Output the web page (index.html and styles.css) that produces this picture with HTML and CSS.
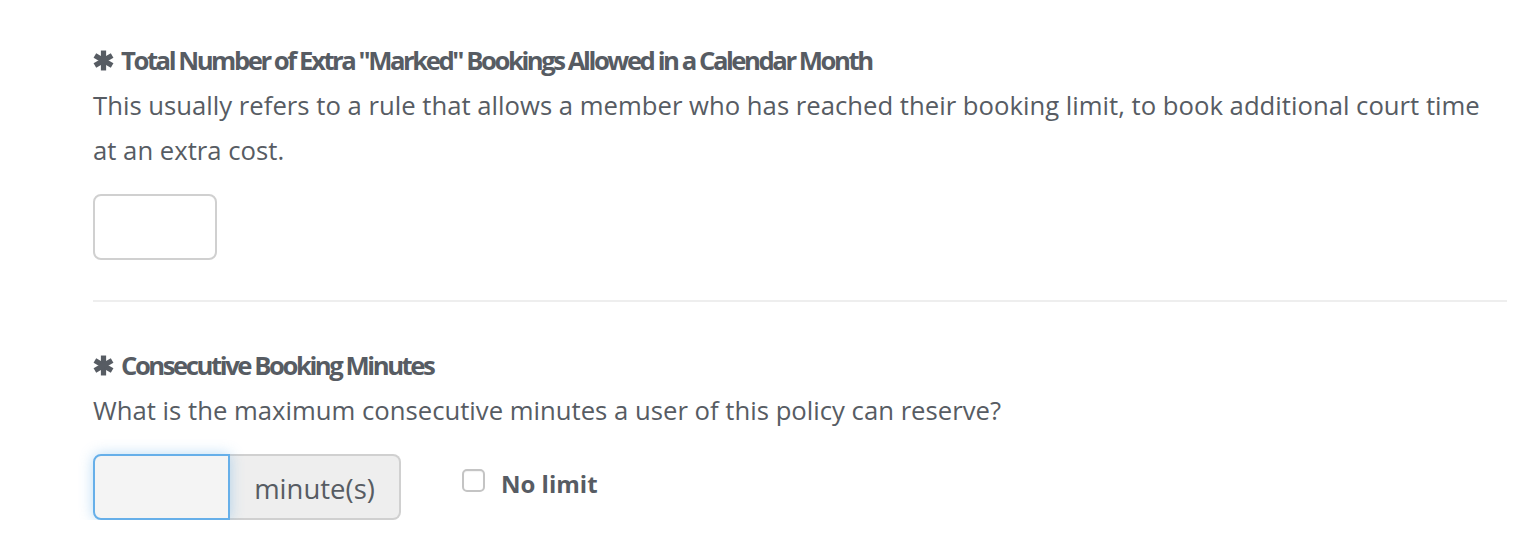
FILE: index.html
```html
<!DOCTYPE html>
<html lang="en">
<head>
<meta charset="utf-8">
<title>Booking policy</title>
<link rel="stylesheet" href="styles.css">
</head>
<body>
<div class="page">
  <section class="field">
    <h3 class="field-title">
      <svg class="req" viewBox="0 0 20 20" aria-hidden="true"><g stroke="currentColor" stroke-width="5"><line x1="10" y1="0.5" x2="10" y2="19.5"/><line x1="1.8" y1="5.25" x2="18.2" y2="14.75"/><line x1="1.8" y1="14.75" x2="18.2" y2="5.25"/></g></svg>
      <span>Total Number of Extra "Marked" Bookings Allowed in a Calendar Month</span>
    </h3>
    <p class="field-help">This usually refers to a rule that allows a member who has reached their booking limit, to book additional court time at an extra cost.</p>
    <input class="text-input small" type="text">
  </section>
  <hr class="divider">
  <section class="field">
    <h3 class="field-title">
      <svg class="req" viewBox="0 0 20 20" aria-hidden="true"><g stroke="currentColor" stroke-width="5"><line x1="10" y1="0.5" x2="10" y2="19.5"/><line x1="1.8" y1="5.25" x2="18.2" y2="14.75"/><line x1="1.8" y1="14.75" x2="18.2" y2="5.25"/></g></svg>
      <span>Consecutive Booking Minutes</span>
    </h3>
    <p class="field-help">What is the maximum consecutive minutes a user of this policy can reserve?</p>
    <div class="control-row">
      <div class="input-group">
        <input class="text-input grouped focused" type="text">
        <span class="addon">minute(s)</span>
      </div>
      <label class="check">
        <input type="checkbox" class="check-box">
        <span>No limit</span>
      </label>
    </div>
  </section>
</div>
</body>
</html>
```

FILE: styles.css
```css
* { box-sizing: border-box; }
html, body { margin: 0; padding: 0; background: #fff; }
body {
  font-family: "Open Sans", "Liberation Sans", sans-serif;
  color: #575c63;
  font-size: 24px;
}
.page {
  padding: 38px 21px 0 93px;
}
.field-title {
  margin: 0;
  font-size: 25.7px;
  line-height: 45px;
  font-weight: 700;
  letter-spacing: -2.45px;
  display: flex;
  align-items: center;
  gap: 7px;
}
.req {
  width: 21px;
  height: 21px;
  flex: none;
  color: #575c63;
}
.field-help {
  margin: 0 0 21px;
  font-size: 25.7px;
  line-height: 45px;
}
.text-input {
  display: block;
  height: 66px;
  border: 2px solid #d0d0d0;
  border-radius: 8px;
  background: #fff;
  font: inherit;
  padding: 0 16px;
  outline: none;
}
.text-input.small { width: 124px; }
.divider {
  margin: 40px 0 41px;
  border: 0;
  border-top: 2px solid #eeeeee;
}
.control-row {
  display: flex;
  align-items: flex-start;
}
.input-group {
  display: flex;
}
.text-input.grouped {
  width: 137px;
  border-radius: 8px 0 0 8px;
}
.text-input.focused {
  border-color: #66afe9;
  background: #f4f4f4;
  box-shadow: 0 0 14px rgba(102, 175, 233, 0.45);
  position: relative;
  z-index: 1;
}
.addon {
  display: flex;
  align-items: center;
  justify-content: center;
  width: 171px;
  height: 66px;
  background: #eeeeee;
  border: 2px solid #d0d0d0;
  border-left: 0;
  border-radius: 0 8px 8px 0;
  color: #575c63;
  font-size: 27.5px;
  padding-top: 2px;
}
.check {
  display: flex;
  align-items: flex-start;
  margin: 13px 0 0 61px;
  line-height: 33px;
  font-weight: 700;
  color: #575c63;
}
.check-box {
  appearance: none;
  -webkit-appearance: none;
  width: 23px;
  height: 23px;
  margin: 2px 16px 0 0;
  border: 2px solid #c4c4c4;
  border-radius: 5px;
  background: #fff;
  box-shadow: inset 0 1px 1px rgba(0,0,0,0.05);
}
```
